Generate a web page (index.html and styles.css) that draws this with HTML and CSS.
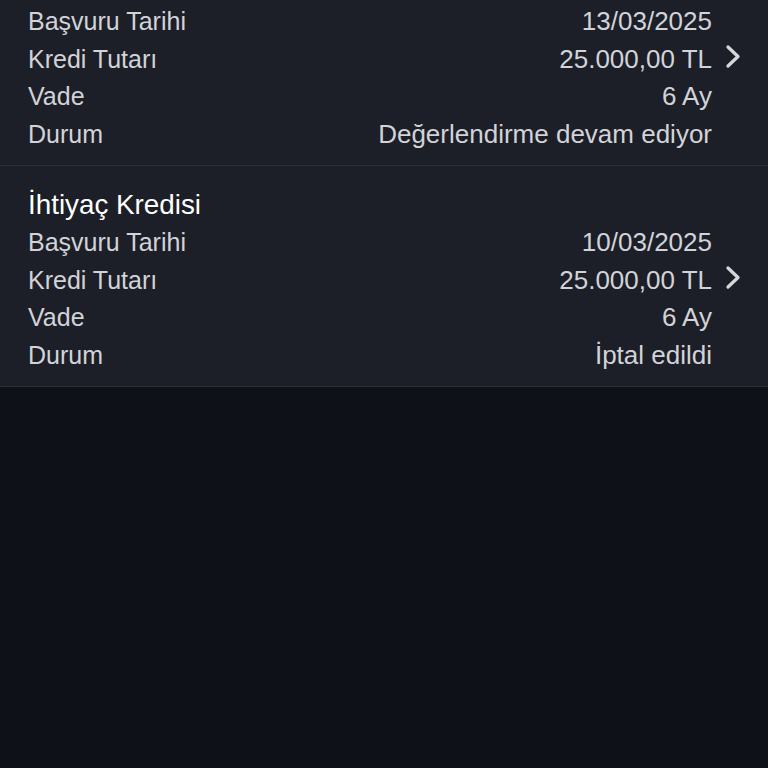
FILE: index.html
```html
<!DOCTYPE html>
<html lang="tr">
<head>
<meta charset="utf-8">
<link rel="stylesheet" href="styles.css">
</head>
<body>
<div class="list">
  <section class="card">
    <div class="title">İhtiyaç Kredisi</div>
    <div class="row"><span class="label">Başvuru Tarihi</span><span class="value">13/03/2025</span><span class="chev"></span></div>
    <div class="row"><span class="label">Kredi Tutarı</span><span class="value">25.000,00 TL</span><span class="chev"><svg width="20" height="26" viewBox="0 0 20 26"><path d="M4 3 L14 12.5 L4 22" fill="none" stroke="#d6d7db" stroke-width="3.3" stroke-linecap="round" stroke-linejoin="round"/></svg></span></div>
    <div class="row"><span class="label">Vade</span><span class="value">6 Ay</span><span class="chev"></span></div>
    <div class="row"><span class="label">Durum</span><span class="value">Değerlendirme devam ediyor</span><span class="chev"></span></div>
  </section>
  <section class="card">
    <div class="title">İhtiyaç Kredisi</div>
    <div class="row"><span class="label">Başvuru Tarihi</span><span class="value">10/03/2025</span><span class="chev"></span></div>
    <div class="row"><span class="label">Kredi Tutarı</span><span class="value">25.000,00 TL</span><span class="chev"><svg width="20" height="26" viewBox="0 0 20 26"><path d="M4 3 L14 12.5 L4 22" fill="none" stroke="#d6d7db" stroke-width="3.3" stroke-linecap="round" stroke-linejoin="round"/></svg></span></div>
    <div class="row"><span class="label">Vade</span><span class="value">6 Ay</span><span class="chev"></span></div>
    <div class="row"><span class="label">Durum</span><span class="value">İptal edildi</span><span class="chev"></span></div>
  </section>
</div>
</body>
</html>
```
FILE: styles.css
```css
html, body {
  margin: 0;
  padding: 0;
  background: #0e1118;
  height: 100%;
  overflow: hidden;
}
body {
  font-family: "Liberation Sans", Arial, sans-serif;
  -webkit-font-smoothing: antialiased;
}
.list {
  margin-top: -55px;
}
.card {
  background: #1c1f27;
  padding: 20px 0 12px 28px;
  border-bottom: 1px solid #2b2f37;
}
.title {
  color: #ffffff;
  font-size: 27.8px;
  line-height: 38px;
  height: 38px;
}
.row {
  display: flex;
  align-items: center;
  height: 37.5px;
  font-size: 25px;
  color: #d2d3d8;
}
.label {
  flex: 1;
}
.value {
  text-align: right;
  font-size: 26px;
}
.chev {
  width: 56px;
  display: flex;
  justify-content: flex-start;
  padding-left: 12px;
  box-sizing: border-box;
}
.chev svg {
  display: block;
  margin-top: -4px;
}
```
